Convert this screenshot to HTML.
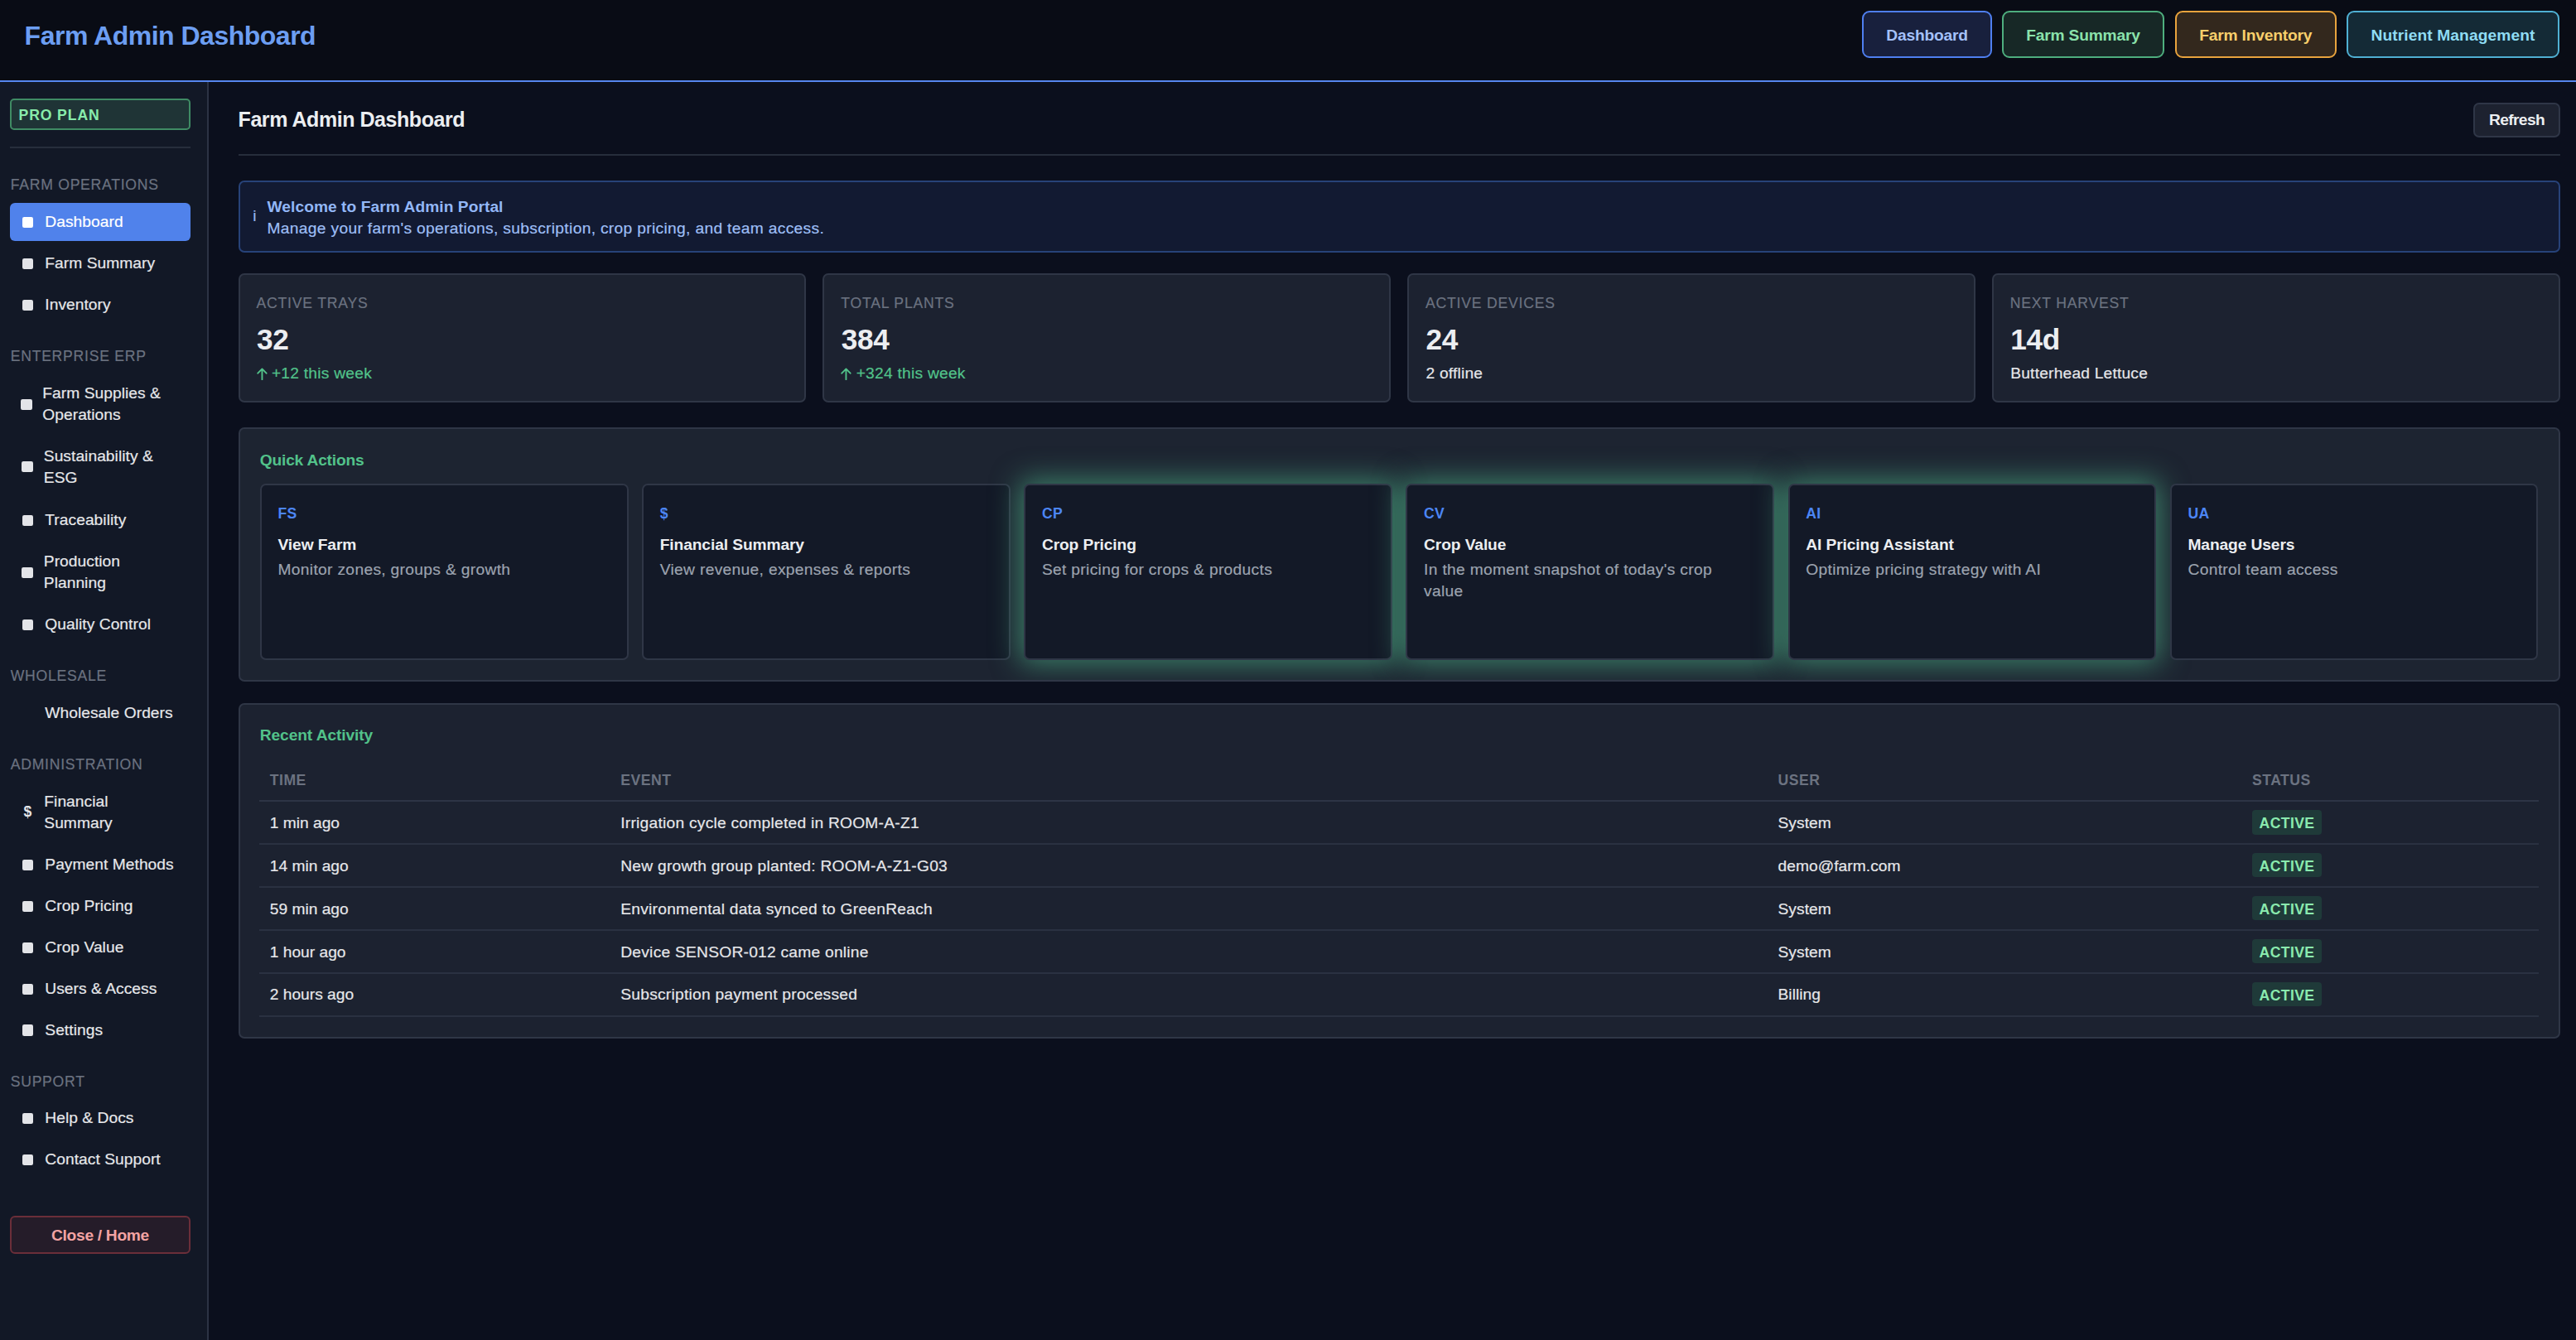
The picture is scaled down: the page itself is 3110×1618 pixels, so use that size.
<!DOCTYPE html>
<html><head><meta charset="utf-8"><title>Farm Admin Dashboard</title>
<style>
html,body{margin:0;padding:0;}
body{width:3110px;height:1618px;overflow:hidden;position:relative;background:#0b0f1d;font-family:"Liberation Sans",sans-serif;}
.t{position:absolute;white-space:nowrap;}
.r{-webkit-text-stroke:0.2px currentColor;}
.b{position:absolute;}
</style></head><body>
<div class="b" style="left:0.00px;top:0.00px;width:3110.00px;height:97.00px;background:#090c15;"></div>
<div class="b" style="left:0.00px;top:97.00px;width:3110.00px;height:2.00px;background:#5686ee;"></div>
<div class="t" style="left:29.60px;top:22.81px;font-size:32px;line-height:40.0px;color:#6c9ef2;font-weight:700;letter-spacing:-0.5px;">Farm Admin Dashboard</div>
<div class="b" style="left:2248.00px;top:13.00px;width:157.00px;height:57.00px;background:#18203d;border:2.5px solid #4f7ff0;border-radius:9px;box-sizing:border-box;"></div>
<div class="t" style="left:2248.00px;top:30.74px;font-size:19.2px;line-height:24.0px;color:#a4c1fa;font-weight:700;letter-spacing:-0.2px;text-align:center;width:157px;">Dashboard</div>
<div class="b" style="left:2417.00px;top:13.00px;width:196.00px;height:57.00px;background:#172826;border:2.5px solid #4eae7e;border-radius:9px;box-sizing:border-box;"></div>
<div class="t" style="left:2417.00px;top:30.74px;font-size:19.2px;line-height:24.0px;color:#8ae2ab;font-weight:700;letter-spacing:-0.2px;text-align:center;width:196px;">Farm Summary</div>
<div class="b" style="left:2625.50px;top:13.00px;width:195.50px;height:57.00px;background:#33281d;border:2.5px solid #e8a33d;border-radius:9px;box-sizing:border-box;"></div>
<div class="t" style="left:2625.50px;top:30.74px;font-size:19.2px;line-height:24.0px;color:#f7cf6b;font-weight:700;letter-spacing:-0.2px;text-align:center;width:195.5px;">Farm Inventory</div>
<div class="b" style="left:2833.00px;top:13.00px;width:257.00px;height:57.00px;background:#142a36;border:2.5px solid #4fb0d3;border-radius:9px;box-sizing:border-box;"></div>
<div class="t" style="left:2833.00px;top:30.74px;font-size:19.2px;line-height:24.0px;color:#8fdcf3;font-weight:700;letter-spacing:0.1px;text-align:center;width:257px;">Nutrient Management</div>
<div class="b" style="left:0.00px;top:99.00px;width:250.00px;height:1519.00px;background:#121826;"></div>
<div class="b" style="left:250.00px;top:99.00px;width:2.00px;height:1519.00px;background:#2c3344;"></div>
<div class="b" style="left:12.00px;top:119.00px;width:218.00px;height:38.00px;background:#1f3436;border:2px solid #3f8b64;border-radius:5px;box-sizing:border-box;"></div>
<div class="t" style="left:22.50px;top:128.00px;font-size:17.6px;line-height:22.0px;color:#88ecab;font-weight:700;letter-spacing:0.9px;">PRO PLAN</div>
<div class="b" style="left:12.00px;top:177.00px;width:218.00px;height:2.00px;background:#272e3c;"></div>
<div class="t r" style="left:12.70px;top:212.20px;font-size:17.6px;line-height:22.0px;color:#6b7280;letter-spacing:0.75px;">FARM OPERATIONS</div>
<div class="b" style="left:12.00px;top:245.35px;width:218.00px;height:46.00px;background:#5082eb;border-radius:6px;"></div>
<div class="b" style="left:26.70px;top:261.75px;width:13.70px;height:13.20px;background:#ffffff;border-radius:2.2px;"></div>
<div class="t r" style="left:54.30px;top:256.34px;font-size:19.2px;line-height:24.0px;color:#ffffff;letter-spacing:0.05px;">Dashboard</div>
<div class="b" style="left:26.70px;top:311.75px;width:13.70px;height:13.20px;background:#e3e4e8;border-radius:2.2px;"></div>
<div class="t r" style="left:54.30px;top:306.34px;font-size:19.2px;line-height:24.0px;color:#e6e7ea;letter-spacing:0.05px;">Farm Summary</div>
<div class="b" style="left:26.70px;top:361.50px;width:13.70px;height:13.20px;background:#e3e4e8;border-radius:2.2px;"></div>
<div class="t r" style="left:54.30px;top:356.09px;font-size:19.2px;line-height:24.0px;color:#e6e7ea;letter-spacing:0.05px;">Inventory</div>
<div class="t r" style="left:12.70px;top:419.10px;font-size:17.6px;line-height:22.0px;color:#6b7280;letter-spacing:0.75px;">ENTERPRISE ERP</div>
<div class="b" style="left:25.20px;top:481.60px;width:13.70px;height:13.20px;background:#e3e4e8;border-radius:2.2px;"></div>
<div class="t r" style="left:51.30px;top:463.34px;font-size:19.2px;line-height:24.0px;color:#e6e7ea;letter-spacing:0.05px;">Farm Supplies &amp;</div>
<div class="t r" style="left:51.30px;top:489.04px;font-size:19.2px;line-height:24.0px;color:#e6e7ea;letter-spacing:0.05px;">Operations</div>
<div class="b" style="left:25.95px;top:557.30px;width:13.70px;height:13.20px;background:#e3e4e8;border-radius:2.2px;"></div>
<div class="t r" style="left:52.80px;top:539.04px;font-size:19.2px;line-height:24.0px;color:#e6e7ea;letter-spacing:0.05px;">Sustainability &amp;</div>
<div class="t r" style="left:52.80px;top:564.74px;font-size:19.2px;line-height:24.0px;color:#e6e7ea;letter-spacing:0.05px;">ESG</div>
<div class="b" style="left:26.70px;top:621.75px;width:13.70px;height:13.20px;background:#e3e4e8;border-radius:2.2px;"></div>
<div class="t r" style="left:54.30px;top:616.34px;font-size:19.2px;line-height:24.0px;color:#e6e7ea;letter-spacing:0.05px;">Traceability</div>
<div class="b" style="left:25.95px;top:684.60px;width:13.70px;height:13.20px;background:#e3e4e8;border-radius:2.2px;"></div>
<div class="t r" style="left:52.80px;top:666.34px;font-size:19.2px;line-height:24.0px;color:#e6e7ea;letter-spacing:0.05px;">Production</div>
<div class="t r" style="left:52.80px;top:692.04px;font-size:19.2px;line-height:24.0px;color:#e6e7ea;letter-spacing:0.05px;">Planning</div>
<div class="b" style="left:26.70px;top:747.75px;width:13.70px;height:13.20px;background:#e3e4e8;border-radius:2.2px;"></div>
<div class="t r" style="left:54.30px;top:742.34px;font-size:19.2px;line-height:24.0px;color:#e6e7ea;letter-spacing:0.05px;">Quality Control</div>
<div class="t r" style="left:12.70px;top:804.90px;font-size:17.6px;line-height:22.0px;color:#6b7280;letter-spacing:0.75px;">WHOLESALE</div>
<div class="t r" style="left:54.30px;top:849.34px;font-size:19.2px;line-height:24.0px;color:#e6e7ea;letter-spacing:0.05px;">Wholesale Orders</div>
<div class="t r" style="left:12.70px;top:911.90px;font-size:17.6px;line-height:22.0px;color:#6b7280;letter-spacing:0.75px;">ADMINISTRATION</div>
<div class="t" style="left:28.50px;top:968.50px;font-size:17.6px;line-height:22.0px;color:#e3e4e8;font-weight:700;">$</div>
<div class="t r" style="left:53.30px;top:956.34px;font-size:19.2px;line-height:24.0px;color:#e6e7ea;letter-spacing:0.05px;">Financial</div>
<div class="t r" style="left:53.30px;top:982.04px;font-size:19.2px;line-height:24.0px;color:#e6e7ea;letter-spacing:0.05px;">Summary</div>
<div class="b" style="left:26.70px;top:1037.75px;width:13.70px;height:13.20px;background:#e3e4e8;border-radius:2.2px;"></div>
<div class="t r" style="left:54.30px;top:1032.34px;font-size:19.2px;line-height:24.0px;color:#e6e7ea;letter-spacing:0.05px;">Payment Methods</div>
<div class="b" style="left:26.70px;top:1087.75px;width:13.70px;height:13.20px;background:#e3e4e8;border-radius:2.2px;"></div>
<div class="t r" style="left:54.30px;top:1082.34px;font-size:19.2px;line-height:24.0px;color:#e6e7ea;letter-spacing:0.05px;">Crop Pricing</div>
<div class="b" style="left:26.70px;top:1137.75px;width:13.70px;height:13.20px;background:#e3e4e8;border-radius:2.2px;"></div>
<div class="t r" style="left:54.30px;top:1132.34px;font-size:19.2px;line-height:24.0px;color:#e6e7ea;letter-spacing:0.05px;">Crop Value</div>
<div class="b" style="left:26.70px;top:1187.75px;width:13.70px;height:13.20px;background:#e3e4e8;border-radius:2.2px;"></div>
<div class="t r" style="left:54.30px;top:1182.34px;font-size:19.2px;line-height:24.0px;color:#e6e7ea;letter-spacing:0.05px;">Users &amp; Access</div>
<div class="b" style="left:26.70px;top:1237.45px;width:13.70px;height:13.20px;background:#e3e4e8;border-radius:2.2px;"></div>
<div class="t r" style="left:54.30px;top:1232.04px;font-size:19.2px;line-height:24.0px;color:#e6e7ea;letter-spacing:0.05px;">Settings</div>
<div class="t r" style="left:12.70px;top:1294.60px;font-size:17.6px;line-height:22.0px;color:#6b7280;letter-spacing:0.75px;">SUPPORT</div>
<div class="b" style="left:26.70px;top:1343.75px;width:13.70px;height:13.20px;background:#e3e4e8;border-radius:2.2px;"></div>
<div class="t r" style="left:54.30px;top:1338.34px;font-size:19.2px;line-height:24.0px;color:#e6e7ea;letter-spacing:0.05px;">Help &amp; Docs</div>
<div class="b" style="left:26.70px;top:1393.75px;width:13.70px;height:13.20px;background:#e3e4e8;border-radius:2.2px;"></div>
<div class="t r" style="left:54.30px;top:1388.34px;font-size:19.2px;line-height:24.0px;color:#e6e7ea;letter-spacing:0.05px;">Contact Support</div>
<div class="b" style="left:12.00px;top:1468.00px;width:218.00px;height:46.00px;background:#251c29;border:2px solid #6b2e39;border-radius:6px;box-sizing:border-box;"></div>
<div class="t" style="left:12.00px;top:1479.54px;font-size:19.2px;line-height:24.0px;color:#f3a3a3;font-weight:700;letter-spacing:-0.3px;text-align:center;width:218px;">Close / Home</div>
<div class="t" style="left:287.60px;top:129.11px;font-size:25px;line-height:31.25px;color:#eceef1;font-weight:700;letter-spacing:-0.45px;">Farm Admin Dashboard</div>
<div class="b" style="left:2986.00px;top:124.00px;width:105.00px;height:42.00px;background:#1d2230;border:2px solid #2f3647;border-radius:7px;box-sizing:border-box;"></div>
<div class="t" style="left:2986.00px;top:133.44px;font-size:19.2px;line-height:24.0px;color:#eceef1;font-weight:700;letter-spacing:-0.6px;text-align:center;width:105px;">Refresh</div>
<div class="b" style="left:287.50px;top:186.00px;width:2803.00px;height:2.00px;background:#262d3b;"></div>
<div class="b" style="left:287.50px;top:218.00px;width:2803.00px;height:87.00px;background:#121a32;border:2px solid #274278;border-radius:7px;box-sizing:border-box;"></div>
<div class="t r" style="left:305.20px;top:249.24px;font-size:19.2px;line-height:24.0px;color:#93b4f0;">i</div>
<div class="t" style="left:322.50px;top:237.64px;font-size:19.2px;line-height:24.0px;color:#92b7f7;font-weight:700;letter-spacing:0.05px;">Welcome to Farm Admin Portal</div>
<div class="t r" style="left:322.50px;top:263.64px;font-size:19.2px;line-height:24.0px;color:#9ebff6;letter-spacing:0.33px;">Manage your farm's operations, subscription, crop pricing, and team access.</div>
<div class="b" style="left:287.50px;top:330.00px;width:685.75px;height:156.00px;background:#1c2230;border:2px solid #2f3646;border-radius:7px;box-sizing:border-box;"></div>
<div class="t r" style="left:309.50px;top:355.00px;font-size:17.6px;line-height:22.0px;color:#6b7280;letter-spacing:0.8px;">ACTIVE TRAYS</div>
<div class="t" style="left:310.00px;top:388.10px;font-size:35.2px;line-height:44.0px;color:#eceef1;font-weight:700;letter-spacing:-0.3px;">32</div>
<svg class="b" style="left:309.50px;top:444px;width:13px;height:15px" viewBox="0 0 13 15"><path d="M6.45 14.2V1.6M1.3 6.7L6.45 1.4L11.6 6.7" fill="none" stroke="#52c28a" stroke-width="1.9" stroke-linecap="round" stroke-linejoin="round"/></svg>
<div class="t r" style="left:327.90px;top:438.84px;font-size:19.2px;line-height:24.0px;color:#52c28a;letter-spacing:0.25px;">+12 this week</div>
<div class="b" style="left:993.25px;top:330.00px;width:685.75px;height:156.00px;background:#1c2230;border:2px solid #2f3646;border-radius:7px;box-sizing:border-box;"></div>
<div class="t r" style="left:1015.25px;top:355.00px;font-size:17.6px;line-height:22.0px;color:#6b7280;letter-spacing:0.8px;">TOTAL PLANTS</div>
<div class="t" style="left:1015.75px;top:388.10px;font-size:35.2px;line-height:44.0px;color:#eceef1;font-weight:700;letter-spacing:-0.3px;">384</div>
<svg class="b" style="left:1015.25px;top:444px;width:13px;height:15px" viewBox="0 0 13 15"><path d="M6.45 14.2V1.6M1.3 6.7L6.45 1.4L11.6 6.7" fill="none" stroke="#52c28a" stroke-width="1.9" stroke-linecap="round" stroke-linejoin="round"/></svg>
<div class="t r" style="left:1033.65px;top:438.84px;font-size:19.2px;line-height:24.0px;color:#52c28a;letter-spacing:0.25px;">+324 this week</div>
<div class="b" style="left:1699.00px;top:330.00px;width:685.75px;height:156.00px;background:#1c2230;border:2px solid #2f3646;border-radius:7px;box-sizing:border-box;"></div>
<div class="t r" style="left:1721.00px;top:355.00px;font-size:17.6px;line-height:22.0px;color:#6b7280;letter-spacing:0.8px;">ACTIVE DEVICES</div>
<div class="t" style="left:1721.50px;top:388.10px;font-size:35.2px;line-height:44.0px;color:#eceef1;font-weight:700;letter-spacing:-0.3px;">24</div>
<div class="t r" style="left:1721.50px;top:438.84px;font-size:19.2px;line-height:24.0px;color:#e6e7ea;letter-spacing:0.2px;">2 offline</div>
<div class="b" style="left:2404.75px;top:330.00px;width:685.75px;height:156.00px;background:#1c2230;border:2px solid #2f3646;border-radius:7px;box-sizing:border-box;"></div>
<div class="t r" style="left:2426.75px;top:355.00px;font-size:17.6px;line-height:22.0px;color:#6b7280;letter-spacing:0.8px;">NEXT HARVEST</div>
<div class="t" style="left:2427.25px;top:388.10px;font-size:35.2px;line-height:44.0px;color:#eceef1;font-weight:700;letter-spacing:-0.3px;">14d</div>
<div class="t r" style="left:2427.25px;top:438.84px;font-size:19.2px;line-height:24.0px;color:#e6e7ea;letter-spacing:0.2px;">Butterhead Lettuce</div>
<div class="b" style="left:287.50px;top:516.00px;width:2803.00px;height:307.00px;background:#1d2431;border:2px solid #2f3646;border-radius:7px;box-sizing:border-box;overflow:hidden;"><div class="t" style="left:24.25px;top:25.84px;font-size:19.2px;line-height:24.0px;color:#52c28a;font-weight:700;letter-spacing:-0.2px;">Quick Actions</div><div class="b" style="left:24.25px;top:65.80px;width:444.79px;height:213.70px;background:#131927;border:2px solid #2f3646;border-radius:7px;box-sizing:border-box;"></div><div class="t" style="left:46.00px;top:91.15px;font-size:17.6px;line-height:22.0px;color:#4c86f5;font-weight:700;letter-spacing:0.3px;">FS</div><div class="t" style="left:46.00px;top:127.84px;font-size:19.2px;line-height:24.0px;color:#eceef1;font-weight:700;letter-spacing:-0.1px;">View Farm</div><div class="t r" style="left:46.00px;top:157.84px;font-size:19.2px;line-height:24.0px;color:#9ca3af;letter-spacing:0.33px;">Monitor zones, groups &amp; growth</div><div class="b" style="left:485.44px;top:65.80px;width:444.79px;height:213.70px;background:#131927;border:2px solid #2f3646;border-radius:7px;box-sizing:border-box;"></div><div class="t" style="left:507.19px;top:91.15px;font-size:17.6px;line-height:22.0px;color:#4c86f5;font-weight:700;letter-spacing:0.3px;">$</div><div class="t" style="left:507.19px;top:127.84px;font-size:19.2px;line-height:24.0px;color:#eceef1;font-weight:700;letter-spacing:-0.1px;">Financial Summary</div><div class="t r" style="left:507.19px;top:157.84px;font-size:19.2px;line-height:24.0px;color:#9ca3af;letter-spacing:0.33px;">View revenue, expenses &amp; reports</div><div class="b" style="left:946.63px;top:65.80px;width:444.79px;height:213.70px;background:#131927;border:2px solid #2f3646;border-radius:7px;box-sizing:border-box;box-shadow:0 0 34px 5px rgba(80,186,140,0.6);"></div><div class="t" style="left:968.38px;top:91.15px;font-size:17.6px;line-height:22.0px;color:#4c86f5;font-weight:700;letter-spacing:0.3px;">CP</div><div class="t" style="left:968.38px;top:127.84px;font-size:19.2px;line-height:24.0px;color:#eceef1;font-weight:700;letter-spacing:-0.1px;">Crop Pricing</div><div class="t r" style="left:968.38px;top:157.84px;font-size:19.2px;line-height:24.0px;color:#9ca3af;letter-spacing:0.33px;">Set pricing for crops &amp; products</div><div class="b" style="left:1407.83px;top:65.80px;width:444.79px;height:213.70px;background:#131927;border:2px solid #2f3646;border-radius:7px;box-sizing:border-box;box-shadow:0 0 34px 5px rgba(80,186,140,0.6);"></div><div class="t" style="left:1429.58px;top:91.15px;font-size:17.6px;line-height:22.0px;color:#4c86f5;font-weight:700;letter-spacing:0.3px;">CV</div><div class="t" style="left:1429.58px;top:127.84px;font-size:19.2px;line-height:24.0px;color:#eceef1;font-weight:700;letter-spacing:-0.1px;">Crop Value</div><div class="t r" style="left:1429.58px;top:157.84px;font-size:19.2px;line-height:24.0px;color:#9ca3af;letter-spacing:0.33px;">In the moment snapshot of today's crop</div><div class="t r" style="left:1429.58px;top:183.84px;font-size:19.2px;line-height:24.0px;color:#9ca3af;letter-spacing:0.33px;">value</div><div class="b" style="left:1869.02px;top:65.80px;width:444.79px;height:213.70px;background:#131927;border:2px solid #2f3646;border-radius:7px;box-sizing:border-box;box-shadow:0 0 34px 5px rgba(80,186,140,0.6);"></div><div class="t" style="left:1890.77px;top:91.15px;font-size:17.6px;line-height:22.0px;color:#4c86f5;font-weight:700;letter-spacing:0.3px;">AI</div><div class="t" style="left:1890.77px;top:127.84px;font-size:19.2px;line-height:24.0px;color:#eceef1;font-weight:700;letter-spacing:-0.1px;">AI Pricing Assistant</div><div class="t r" style="left:1890.77px;top:157.84px;font-size:19.2px;line-height:24.0px;color:#9ca3af;letter-spacing:0.33px;">Optimize pricing strategy with AI</div><div class="b" style="left:2330.21px;top:65.80px;width:444.79px;height:213.70px;background:#131927;border:2px solid #2f3646;border-radius:7px;box-sizing:border-box;"></div><div class="t" style="left:2351.96px;top:91.15px;font-size:17.6px;line-height:22.0px;color:#4c86f5;font-weight:700;letter-spacing:0.3px;">UA</div><div class="t" style="left:2351.96px;top:127.84px;font-size:19.2px;line-height:24.0px;color:#eceef1;font-weight:700;letter-spacing:-0.1px;">Manage Users</div><div class="t r" style="left:2351.96px;top:157.84px;font-size:19.2px;line-height:24.0px;color:#9ca3af;letter-spacing:0.33px;">Control team access</div></div>
<div class="b" style="left:287.50px;top:849.00px;width:2803.00px;height:404.50px;background:#1c2230;border:2px solid #2f3646;border-radius:7px;box-sizing:border-box;"></div>
<div class="t" style="left:313.75px;top:875.84px;font-size:19.2px;line-height:24.0px;color:#52c28a;font-weight:700;letter-spacing:-0.1px;">Recent Activity</div>
<div class="t" style="left:325.75px;top:931.15px;font-size:17.6px;line-height:22.0px;color:#6b7280;font-weight:700;letter-spacing:0.5px;">TIME</div>
<div class="t" style="left:749.25px;top:931.15px;font-size:17.6px;line-height:22.0px;color:#6b7280;font-weight:700;letter-spacing:0.5px;">EVENT</div>
<div class="t" style="left:2146.50px;top:931.15px;font-size:17.6px;line-height:22.0px;color:#6b7280;font-weight:700;letter-spacing:0.5px;">USER</div>
<div class="t" style="left:2719.00px;top:931.15px;font-size:17.6px;line-height:22.0px;color:#6b7280;font-weight:700;letter-spacing:0.5px;">STATUS</div>
<div class="b" style="left:313.00px;top:966.00px;width:2752.00px;height:2.00px;background:#2d3445;"></div>
<div class="t r" style="left:325.75px;top:981.84px;font-size:19.2px;line-height:24.0px;color:#e6e7ea;">1 min ago</div>
<div class="t r" style="left:749.25px;top:981.84px;font-size:19.2px;line-height:24.0px;color:#e6e7ea;letter-spacing:0.25px;">Irrigation cycle completed in ROOM-A-Z1</div>
<div class="t r" style="left:2146.50px;top:981.84px;font-size:19.2px;line-height:24.0px;color:#e6e7ea;letter-spacing:0.05px;">System</div>
<div class="b" style="left:2719.00px;top:978.00px;width:84.00px;height:29.60px;background:#1f3a39;border-radius:4px;"></div>
<div class="t" style="left:2719.00px;top:983.10px;font-size:17.6px;line-height:22.0px;color:#8aeaae;font-weight:700;letter-spacing:0.4px;text-align:center;width:84px;">ACTIVE</div>
<div class="b" style="left:313.00px;top:1018.30px;width:2752.00px;height:2.00px;background:#2a3141;"></div>
<div class="t r" style="left:325.75px;top:1033.74px;font-size:19.2px;line-height:24.0px;color:#e6e7ea;">14 min ago</div>
<div class="t r" style="left:749.25px;top:1033.74px;font-size:19.2px;line-height:24.0px;color:#e6e7ea;letter-spacing:0.25px;">New growth group planted: ROOM-A-Z1-G03</div>
<div class="t r" style="left:2146.50px;top:1033.74px;font-size:19.2px;line-height:24.0px;color:#e6e7ea;letter-spacing:0.05px;">demo@farm.com</div>
<div class="b" style="left:2719.00px;top:1029.90px;width:84.00px;height:29.60px;background:#1f3a39;border-radius:4px;"></div>
<div class="t" style="left:2719.00px;top:1035.00px;font-size:17.6px;line-height:22.0px;color:#8aeaae;font-weight:700;letter-spacing:0.4px;text-align:center;width:84px;">ACTIVE</div>
<div class="b" style="left:313.00px;top:1070.20px;width:2752.00px;height:2.00px;background:#2a3141;"></div>
<div class="t r" style="left:325.75px;top:1085.64px;font-size:19.2px;line-height:24.0px;color:#e6e7ea;">59 min ago</div>
<div class="t r" style="left:749.25px;top:1085.64px;font-size:19.2px;line-height:24.0px;color:#e6e7ea;letter-spacing:0.25px;">Environmental data synced to GreenReach</div>
<div class="t r" style="left:2146.50px;top:1085.64px;font-size:19.2px;line-height:24.0px;color:#e6e7ea;letter-spacing:0.05px;">System</div>
<div class="b" style="left:2719.00px;top:1081.80px;width:84.00px;height:29.60px;background:#1f3a39;border-radius:4px;"></div>
<div class="t" style="left:2719.00px;top:1086.90px;font-size:17.6px;line-height:22.0px;color:#8aeaae;font-weight:700;letter-spacing:0.4px;text-align:center;width:84px;">ACTIVE</div>
<div class="b" style="left:313.00px;top:1122.10px;width:2752.00px;height:2.00px;background:#2a3141;"></div>
<div class="t r" style="left:325.75px;top:1137.54px;font-size:19.2px;line-height:24.0px;color:#e6e7ea;">1 hour ago</div>
<div class="t r" style="left:749.25px;top:1137.54px;font-size:19.2px;line-height:24.0px;color:#e6e7ea;letter-spacing:0.25px;">Device SENSOR-012 came online</div>
<div class="t r" style="left:2146.50px;top:1137.54px;font-size:19.2px;line-height:24.0px;color:#e6e7ea;letter-spacing:0.05px;">System</div>
<div class="b" style="left:2719.00px;top:1133.70px;width:84.00px;height:29.60px;background:#1f3a39;border-radius:4px;"></div>
<div class="t" style="left:2719.00px;top:1138.80px;font-size:17.6px;line-height:22.0px;color:#8aeaae;font-weight:700;letter-spacing:0.4px;text-align:center;width:84px;">ACTIVE</div>
<div class="b" style="left:313.00px;top:1174.00px;width:2752.00px;height:2.00px;background:#2a3141;"></div>
<div class="t r" style="left:325.75px;top:1189.44px;font-size:19.2px;line-height:24.0px;color:#e6e7ea;">2 hours ago</div>
<div class="t r" style="left:749.25px;top:1189.44px;font-size:19.2px;line-height:24.0px;color:#e6e7ea;letter-spacing:0.25px;">Subscription payment processed</div>
<div class="t r" style="left:2146.50px;top:1189.44px;font-size:19.2px;line-height:24.0px;color:#e6e7ea;letter-spacing:0.05px;">Billing</div>
<div class="b" style="left:2719.00px;top:1185.60px;width:84.00px;height:29.60px;background:#1f3a39;border-radius:4px;"></div>
<div class="t" style="left:2719.00px;top:1190.70px;font-size:17.6px;line-height:22.0px;color:#8aeaae;font-weight:700;letter-spacing:0.4px;text-align:center;width:84px;">ACTIVE</div>
<div class="b" style="left:313.00px;top:1225.90px;width:2752.00px;height:2.00px;background:#2a3141;"></div>
</body></html>
